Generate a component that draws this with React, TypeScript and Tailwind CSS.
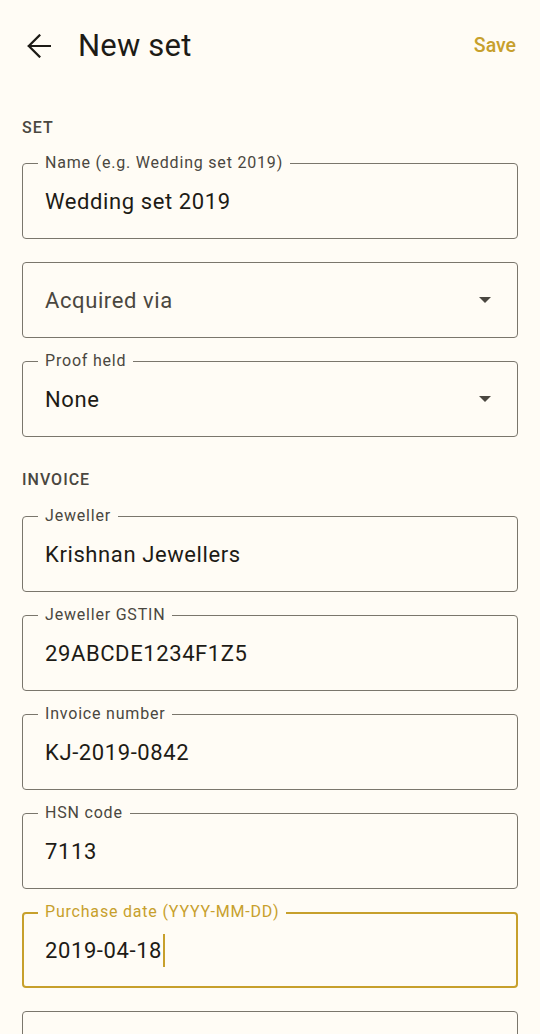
import { useState } from 'react'

const gold = 'text-[#c7a02c]'

function ArrowBack() {
  return (
    <svg width="24" height="24" viewBox="0 0 24 24" className="text-[#1d1b16]">
      <path
        d="M23 12H1.8M12.4 1.4L1.8 12l10.6 10.6"
        fill="none"
        stroke="currentColor"
        strokeWidth="2.2"
        strokeLinecap="square"
      />
    </svg>
  )
}

function Caret() {
  return (
    <svg width="12" height="6" viewBox="0 0 12 6" className="text-[#4a4740]">
      <path d="M0 0h12L6 6z" fill="currentColor" />
    </svg>
  )
}

function SectionLabel({ children }: { children: string }) {
  return (
    <div className="h-5 text-[16px] leading-5 font-medium tracking-[1px] text-[#4a4740]">
      {children}
    </div>
  )
}

type FieldProps = {
  label?: string
  value?: string
  placeholder?: string
  select?: boolean
  focused?: boolean
}

function Field({ label, value, placeholder, select, focused }: FieldProps) {
  return (
    <div
      className={
        focused
          ? 'relative h-[76px] rounded-[4px] border-2 border-[#c7a02c] flex items-center pl-[21px] pr-[25px]'
          : 'relative h-[76px] rounded-[4px] border border-[#7a766c] flex items-center pl-[22px] pr-[26px]'
      }
    >
      {label && (
        <span
          className={
            (focused ? 'left-[14px] -top-[11px] ' + gold : 'left-[15px] -top-[10px] text-[#4a4740]') +
            ' absolute px-[7px] bg-[#fffcf5] text-[16px] leading-[18px] tracking-[0.8px]'
          }
        >
          {label}
        </span>
      )}
      <div className="flex-1 flex items-center text-[22px] tracking-[0.6px]">
        {value ? (
          <span className="text-[#1d1b16]">{value}</span>
        ) : (
          <span className="text-[#4a4740]">{placeholder}</span>
        )}
        {focused && <span className="ml-[1px] w-[2px] h-[33px] bg-[#c7a02c]" />}
      </div>
      {select && <Caret />}
    </div>
  )
}

export default function App() {
  const [saved, setSaved] = useState(false)

  return (
    <div className="min-h-[1034px] h-[1034px] overflow-hidden bg-[#fffcf5] font-['Roboto',sans-serif]">
      {/* Top bar */}
      <div className="h-[92px] flex items-center pl-[27px] pr-[24px]">
        <ArrowBack />
        <h1 className="ml-[27px] flex-1 text-[31px] leading-9 text-[#1d1b16] tracking-[0.2px]">New set</h1>
        <button onClick={() => setSaved(!saved)} className={'text-[19.5px] font-medium ' + gold}>
          Save
        </button>
      </div>

      <div className="px-[22px] pt-[26px]">
        <SectionLabel>SET</SectionLabel>
        <div className="mt-[25px] flex flex-col gap-[23px]">
          <Field label="Name (e.g. Wedding set 2019)" value="Wedding set 2019" />
          <Field placeholder="Acquired via" select />
          <Field label="Proof held" value="None" select />
        </div>

        <div className="mt-[33px]">
          <SectionLabel>INVOICE</SectionLabel>
        </div>
        <div className="mt-[26px] flex flex-col gap-[23px]">
          <Field label="Jeweller" value="Krishnan Jewellers" />
          <Field label="Jeweller GSTIN" value="29ABCDE1234F1Z5" />
          <Field label="Invoice number" value="KJ-2019-0842" />
          <Field label="HSN code" value="7113" />
          <Field label="Purchase date (YYYY-MM-DD)" value="2019-04-18" focused />
          <Field label="" />
        </div>
      </div>
    </div>
  )
}
